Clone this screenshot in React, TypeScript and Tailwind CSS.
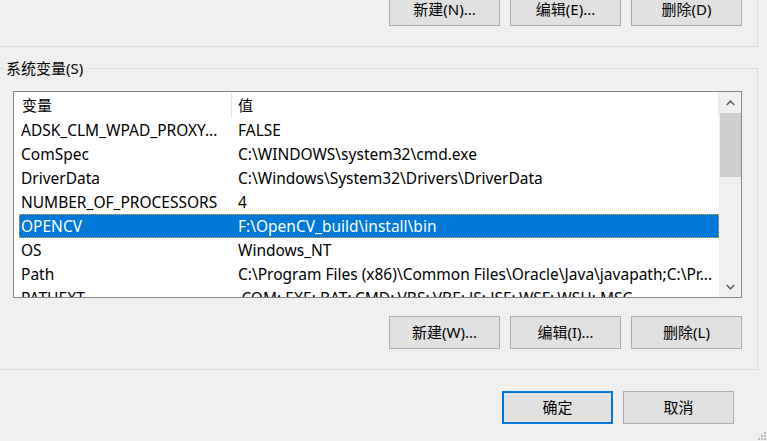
import React from "react";

const rows: [string, string][] = [
  ["ADSK_CLM_WPAD_PROXY...", "FALSE"],
  ["ComSpec", "C:\\WINDOWS\\system32\\cmd.exe"],
  ["DriverData", "C:\\Windows\\System32\\Drivers\\DriverData"],
  ["NUMBER_OF_PROCESSORS", "4"],
  ["OPENCV", "F:\\OpenCV_build\\install\\bin"],
  ["OS", "Windows_NT"],
  ["Path", "C:\\Program Files (x86)\\Common Files\\Oracle\\Java\\javapath;C:\\Pr..."],
  ["PATHEXT", ".COM;.EXE;.BAT;.CMD;.VBS;.VBE;.JS;.JSE;.WSF;.WSH;.MSC"],
];

function Btn({ label, primary }: { label: string; primary?: boolean }) {
  return (
    <div
      className={
        "w-[111px] h-[33px] bg-[#e1e1e1] flex items-center justify-center leading-none " +
        (primary ? "border-2 border-[#0078d7]" : "border border-[#adadad]")
      }
    >
      {label}
    </div>
  );
}

function Chevron({ up }: { up?: boolean }) {
  return (
    <svg width="9" height="6" viewBox="0 0 9 6">
      <polyline
        points={up ? "0.7,5 4.5,1.2 8.3,5" : "0.7,1 4.5,4.8 8.3,1"}
        fill="none"
        stroke="#606060"
        strokeWidth="1.6"
      />
    </svg>
  );
}

export default function App() {
  return (
    <div className="relative w-[767px] h-[441px] overflow-hidden bg-[#f0f0f0] text-[15px] text-black [font-family:'Noto_Sans','Noto_Sans_CJK_SC',sans-serif]">
      {/* top group box (user variables, partially visible) */}
      <div className="ml-[-1px] w-[759px] h-[47px] border-r border-b border-[#dcdcdc] flex justify-end items-start pr-[15px]">
        <div className="flex gap-[10px] mt-[-7px]">
          <Btn label="新建(N)..." />
          <Btn label="编辑(E)..." />
          <Btn label="删除(D)" />
        </div>
      </div>

      {/* system variables group box */}
      <div className="relative mt-[21px] ml-[-1px] w-[759px] h-[302px] border-t border-r border-b border-[#dcdcdc] flex flex-col">
        <div className="absolute left-[6px] top-[-12px] pl-[1px] pr-[4px] bg-[#f0f0f0] leading-[22px]">
          系统变量(S)
        </div>

        <div className="ml-[14px] mt-[22px] w-[729px] h-[207px] border border-[#828790] bg-white flex overflow-hidden">
          <div className="w-[705px] h-full overflow-hidden flex flex-col text-[15.5px]">
            <div className="h-[26px] shrink-0 flex items-center pt-[1px] text-[15px]">
              <div className="w-[218px] h-full pl-[8px] flex items-center border-r border-[#e5e5e5]">
                变量
              </div>
              <div className="flex-1 h-full pl-[6px] flex items-center border-r border-[#e5e5e5]">
                值
              </div>
            </div>
            {rows.map(([k, v], i) => {
              const sel = k === "OPENCV";
              return (
                <div
                  key={i}
                  className={
                    "ml-[5px] h-[24px] shrink-0 flex items-center pt-[2px] whitespace-nowrap " +
                    (sel
                      ? "bg-[#0078d7] text-white border border-dotted border-[#e7a23c]"
                      : "border border-transparent")
                  }
                >
                  <div className="w-[213px] pl-[1px] overflow-hidden">{k}</div>
                  <div className="flex-1 pl-[5px] overflow-hidden">{v}</div>
                </div>
              );
            })}
          </div>
          <div className="w-[22px] h-full bg-[#f0f0f0] flex flex-col">
            <div className="h-[21px] flex items-center justify-center">
              <Chevron up />
            </div>
            <div className="ml-[1px] h-[64px] bg-[#cdcdcd]" />
            <div className="flex-1" />
            <div className="h-[21px] flex items-center justify-center">
              <Chevron />
            </div>
          </div>
        </div>

        <div className="mt-[18px] flex justify-end pr-[15px]">
          <div className="flex gap-[10px]">
            <Btn label="新建(W)..." />
            <Btn label="编辑(I)..." />
            <Btn label="删除(L)" />
          </div>
        </div>
      </div>

      {/* dialog buttons */}
      <div className="mt-[21px] flex justify-end pr-[33px]">
        <div className="flex gap-[10px]">
          <Btn label="确定" primary />
          <Btn label="取消" />
        </div>
      </div>

      {/* size grip */}
      <svg className="absolute right-0 bottom-0" width="10" height="10" viewBox="0 0 10 10">
        <rect x="7" y="1" width="2" height="2" fill="#b9b9b9" />
        <rect x="4" y="4" width="2" height="2" fill="#b9b9b9" />
        <rect x="7" y="4" width="2" height="2" fill="#b9b9b9" />
        <rect x="1" y="7" width="2" height="2" fill="#b9b9b9" />
        <rect x="4" y="7" width="2" height="2" fill="#b9b9b9" />
        <rect x="7" y="7" width="2" height="2" fill="#b9b9b9" />
      </svg>
    </div>
  );
}
